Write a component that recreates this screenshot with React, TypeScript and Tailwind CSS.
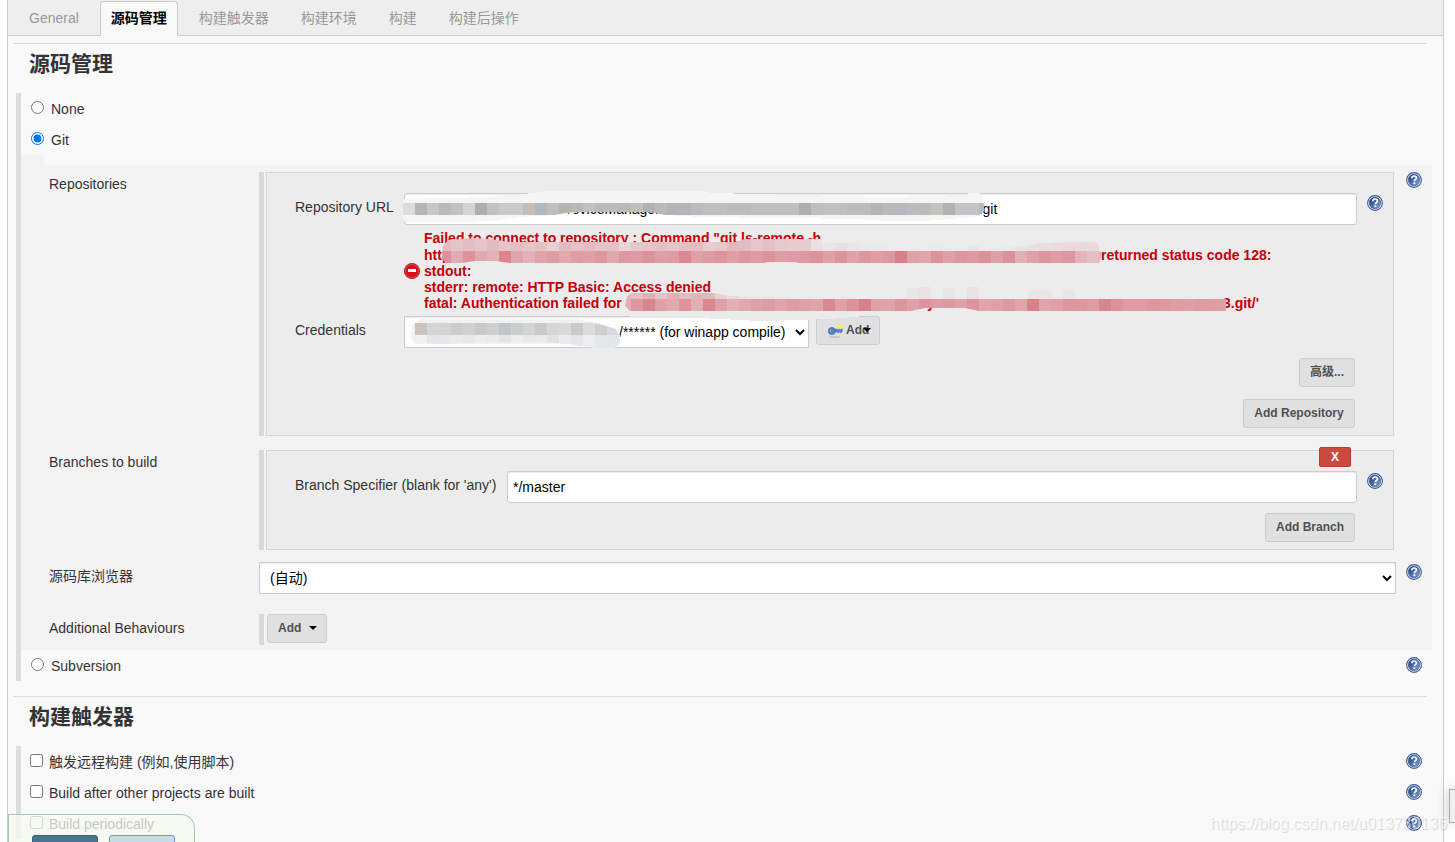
import React, { useState } from 'react';

interface Cell {
  x: number;
  y: number;
  h: number;
  colors: string[];
}

const TABS = ['General', '源码管理', '构建触发器', '构建环境', '构建', '构建后操作'];

const TRIGGERS = ['触发远程构建 (例如,使用脚本)', 'Build after other projects are built', 'Build periodically'];

const URL_CELLS: Cell[] = [
  {
    x: 403,
    y: 203,
    h: 12,
    colors: [
      '#dcdcd9', '#b8b4ae', '#c5c7ca', '#b9bab9', '#c3c2bf', '#d2d4d5', '#aeaeac', '#bfc3c6', '#cacaca', '#cacaca',
      '#c6beb6', '#adb8bf', '#bfbfbd', '#b8b5b1', '#bbb9b6', '#bfc2c1', '#b9bcbd', '#b9bcbd', '#bababa', '#c2beb8',
      '#b0b1b4', '#bcbab6', '#b2b4b6', '#b4b5b6', '#b9bcbd', '#bdc0c2', '#bfc0bd', '#babdbf', '#bbbcbb', '#bfc0bd',
      '#bfc0bd', '#bfbfbf', '#bfbfbf', '#aeaeac', '#c0bdbc', '#bdc1c4', '#bfc0bd', '#babdc0', '#bcbcbc', '#b4b4b3',
      '#b9b9b9', '#b6babe', '#bcbcbd', '#bbbbbb', '#c1c3bd', '#b3b1b2', '#c1c5c8', '#c1c5c8', '#b8babc',
    ],
  },
];

const ERROR_CELLS: Cell[] = [
  {
    x: 439,
    y: 238,
    h: 13,
    colors: [
      '#e3bcc1', '#e5c3c7', '#e2bec2', '#e5c5c8', '#e3babf', '#e5c5c8', '#e3bfc3', '#e5c5c8', '#e4c1c5', '#e7cfd1',
      '#e2b9be', '#e4c3c7', '#e3bdc1', '#e5c5c8', '#e4c1c5', '#e8d3d5', '#e5c7ca', '#e5c5c8', '#e4c0c4', '#e5c3c7',
      '#e4c1c5', '#e4bcc2', '#e8cdd0', '#e7c8cb', '#e3b9bf', '#e3bcc2', '#e5c5c9', '#e4bfc4', '#e6c9cc', '#e7cccf',
      '#e7cccf', '#ebe0e1', '#ebe5e5', '#ebe0e1', '#ebe5e5', '#ebe8e8', '#ebe9e9', '#ebebeb', '#ebebeb', '#ebebeb',
      '#ebebeb', '#ebe9e9', '#ebebeb', '#ebebeb', '#ebe6e6', '#ebebeb', '#ebebeb', '#ebe8e8', '#ebe1e2', '#eadedf',
      '#eadfe0', '#eadcdd', '#e9d9da', '#e9d9da', '#e9dadb', '#e9dadb',
    ],
  },
  {
    x: 439,
    y: 251,
    h: 12,
    colors: [
      '#dc909a', '#e0abb2', '#dc939c', '#e0a8af', '#dfb3b8', '#dc858c', '#dfa5ac', '#e1b2b8', '#dfa3aa', '#de9da6',
      '#e0a8af', '#de9ca4', '#dfa0a7', '#dd979f', '#e0a9b0', '#dd99a1', '#de9ba4', '#dc919b', '#de9ea6', '#de9ba3',
      '#dc8891', '#dfa1a9', '#de99a2', '#dd949d', '#df9fa7', '#dd959f', '#de9ba4', '#dd929c', '#de9ea6', '#df9ba5',
      '#de98a1', '#de929b', '#dfa0a7', '#dd929c', '#e0a2a9', '#dd959e', '#de9ea6', '#de98a1', '#da8088', '#dfa1a9',
      '#e0a5ac', '#dd939c', '#dfa1a9', '#dd969f', '#de9aa3', '#de909b', '#dfa1a9', '#dc929c', '#e1b0b5', '#dfa0a7',
      '#dd949d', '#de9ca4', '#dd97a0', '#e2b5ba', '#e4c0c6', '#e2b0b6',
    ],
  },
  {
    x: 619,
    y: 293,
    h: 6,
    colors: [
      '#e3b6bc', '#e4bdc2', '#e1b1b7', '#e4c4c7', '#e1b1b7', '#e3bcc1', '#e2b4b9', '#e2b9be', '#e7d2d4', '#e9d9da',
      '#ebe1e2', '#ebe5e5', '#ebe1e2', '#ebe5e5', '#ebe8e8',
    ],
  },
  {
    x: 619,
    y: 299,
    h: 12,
    colors: [
      '#e1b0b5', '#dd969f', '#db848b', '#dfa0a7', '#e0a8af', '#dd949d', '#e1b0b5', '#db878e', '#dfa1a9', '#e1b0b5',
      '#e0a9b0', '#dfa1a9', '#de9ba3', '#e0a5ac', '#de9ca4', '#dfa1a9', '#e0a5ac', '#dc8891', '#dfa1a9', '#dd939c',
      '#da8088', '#dfa1a9', '#e0a2a9', '#dd949d', '#dfa1a9', '#dd929c', '#de9ba4', '#de98a1', '#dfa1a9', '#dd929c',
      '#e0a5ac', '#dfa1a9', '#de98a1', '#e0a5ac', '#da8088', '#e0a5ac', '#dfa1a9', '#dd959f', '#dd979f', '#de9ba3',
      '#da858e', '#dd929c', '#de9ba4', '#de9ba4', '#dd969f', '#de989f', '#df9da4', '#df9fa7', '#df9aa2', '#df9da4',
      '#df9fa7',
    ],
  },
];

const CREDENTIAL_CELLS: Cell[] = [
  {
    x: 415,
    y: 323,
    h: 12,
    colors: [
      '#c9c4c0', '#d3d5d6', '#d3d5d5', '#cbcdcd', '#d0d3d2', '#c8c9c8', '#cfcfcf', '#c2c5c8', '#cbcece', '#d2d4d4',
      '#c8cac9', '#d5d6d6', '#d8dada', '#cccac6', '#dddddd', '#cfcfcd', '#d4dadf', '#d8dde1',
    ],
  },
  {
    x: 415,
    y: 335,
    h: 13,
    colors: [
      '#f2f0ef', '#e4e6e7', '#e6e9ea', '#ebebeb', '#e6e9ea', '#eeeeee', '#e8eaeb', '#e4e4e5', '#eceded', '#e6e9ea',
      '#eaebeb', '#e0e1e1', '#e9ebec', '#e4e6e7', '#ebedef', '#e4e7eb', '#e3e7ea', '#e6e9ec',
    ],
  },
];

function Cells({ rows }: { rows: Cell[] }) {
  return (
    <>
      {rows.map((row) =>
        row.colors.map((color, i) => (
          <rect key={`${row.x}-${row.y}-${i}`} x={row.x + i * 12} y={row.y} width="12" height={row.h} fill={color} />
        ))
      )}
    </>
  );
}

// Covers the private parts of the repository form
function Redaction() {
  return (
    <svg
      className="absolute -top-px -left-px pointer-events-none"
      width="1000"
      height="190"
      viewBox="266 172 1000 190"
      shapeRendering="crispEdges"
      aria-hidden="true"
    >
      <defs>
        <clipPath id="url-clip">
          <path d="M403 198H982L984 205V211L979 215H665L655 213L645 212H580L565 213L555 215H403z" />
        </clipPath>
        <clipPath id="error-clip">
          <path d="M443 246L448 240L475 238L490 239L510 242H735L745 239H822V243L880 243L1020 247L1040 243L1085 242H1097L1099 247V251L1102 253L1099 263H799L795 262H768L764 263H510L495 261H475L462 263H446L442 259z" />
          <path d="M627 296L632 293H715L730 296L760 297L800 299H1226V311H979L965 308H925L911 311H630L625 306z" />
        </clipPath>
        <clipPath id="credential-clip">
          <path d="M415 321L440 319H575L602 325L616 329L619 336V345L614 348H597L570 344L540 342H500L440 344L415 342z" />
        </clipPath>
      </defs>
      <path d="M403 199L490 197L533 193L545 191H700L712 193L885 197L930 196L966 195L969 193H980L984 200V211L975 217L925 221H885L860 219L700 217L665 215L655 212H580L557 215L520 217L490 221L460 222H405L403 217z" fill="#f5f5f5" />
      <g clipPath="url(#url-clip)">
        <Cells rows={URL_CELLS} />
      </g>
      <g clipPath="url(#error-clip)">
        <Cells rows={ERROR_CELLS} />
      </g>
      <path d="M919 287h12v12h-12zM967 287h12v12h-12z" fill="#eae1e1" />
      <path d="M907 288h12v11h-12zM943 288h12v11h-12zM1028 290h24v9h-24zM1063 290h12v9h-12z" fill="#ebe6e6" />
      <path d="M628 311H911L883 316H865L830 319L760 321L700 318H631z" fill="#ebebeb" />
      <path d="M412 325L420 319H575L600 323L616 329L620 336V344L614 348H597L565 344H460L415 344L411 338z" fill="#f1f1f1" />
      <g clipPath="url(#credential-clip)">
        <Cells rows={CREDENTIAL_CELLS} />
      </g>
    </svg>
  );
}

function HelpButton({ label }: { label: string }) {
  return (
    <button type="button" aria-label={`Help for ${label}`} className="block size-4 shrink-0">
      <svg viewBox="0 0 16 16" className="size-4">
        <defs>
          <linearGradient id="help-fill" x1="0" y1="0" x2="1" y2="1">
            <stop offset="0.2" stopColor="#274c8c" />
            <stop offset="1" stopColor="#8ba6d3" />
          </linearGradient>
        </defs>
        <circle cx="8" cy="8" r="7.4" fill="#fff" stroke="#3a5a98" strokeWidth="1.1" />
        <circle cx="8" cy="8" r="5.9" fill="url(#help-fill)" stroke="#35558f" strokeWidth="0.5" />
        <path
          d="M5.8 6.2C5.8 4.7 6.8 4 8.1 4c1.4 0 2.3.8 2.3 1.9 0 1.6-2 1.6-2 3.3"
          fill="none"
          stroke="#fff"
          strokeWidth="1.7"
        />
        <path d="M7.4 10.3h1.9v1.8H7.4z" fill="#fff" />
      </svg>
    </button>
  );
}

function ErrorIcon() {
  return (
    <svg viewBox="0 0 16 16" className="size-4 shrink-0" aria-hidden="true">
      <circle cx="8" cy="8" r="7.6" fill="#d3101c" stroke="#a5121b" strokeWidth="0.8" />
      <circle cx="8" cy="8" r="6.6" fill="none" stroke="#e8606a" strokeWidth="0.6" />
      <rect x="4" y="6" width="8" height="3" fill="#fff" />
    </svg>
  );
}

function KeyIcon() {
  return (
    <svg viewBox="0 0 16 16" className="size-4 shrink-0" aria-hidden="true">
      <ellipse cx="8" cy="15" rx="6" ry="0.9" fill="#c6c6c6" />
      <path d="M6 7.2h9.4v2.2h-.8v1.4h-1.8V9.6h-1v1.2h-1.6V9.8H6z" fill="#5b83bf" stroke="#4169a8" strokeWidth="0.4" />
      <circle cx="4.9" cy="9" r="3.6" fill="#5b83c4" stroke="#3d65a5" strokeWidth="0.7" />
      <circle cx="3.6" cy="8.8" r="0.7" fill="#a9c0e2" />
      <circle cx="12.8" cy="4.6" r="2.4" fill="#f6e83a" />
      <circle cx="12.8" cy="4.6" r="1" fill="#fffbb0" />
    </svg>
  );
}

function Caret() {
  return (
    <svg viewBox="0 0 8 4" className="h-1 w-2 shrink-0" aria-hidden="true">
      <path d="M0 0h8L4 4z" fill="#000" />
    </svg>
  );
}

function GreyButton({ children, className = '' }: { children: React.ReactNode; className?: string }) {
  return (
    <button
      type="button"
      className={`flex h-[29px] items-center rounded-[3px] border border-[#ccc] bg-[#e0e0e0] px-2.5 pb-0.5 text-xs font-bold text-[#505050] ${className}`}
    >
      {children}
    </button>
  );
}

function Section({ title, children }: { title: string; children: React.ReactNode }) {
  return (
    <section className="pt-[7px]">
      <hr className="mr-4 ml-[5px] border-[#ddd]" />
      <h2 className="mt-1 ml-[21px] h-[45px] text-[21px] leading-8 font-bold">{title}</h2>
      <div className="mr-[11px] mb-2 ml-2 border-l-[5px] border-[#ddd]">{children}</div>
    </section>
  );
}

function ScmRadio({ name, checked, onChange }: { name: string; checked: boolean; onChange: () => void }) {
  return (
    <div className="flex h-[31px] items-start justify-between pr-2.5 pl-2.5">
      <label className="flex items-start">
        <input type="radio" name="scm" checked={checked} onChange={onChange} className="mt-2 mr-[7px] size-[13px]" />
        <span className="mt-1.5 leading-5">{name}</span>
      </label>
      {name === 'Subversion' && (
        <div className="mt-[7px]">
          <HelpButton label={name} />
        </div>
      )}
    </div>
  );
}

const inputClass =
  'h-8 min-w-0 flex-1 rounded-[3px] border border-[#ccc] bg-white px-[5px] text-black shadow-[inset_0_1px_1px_rgba(0,0,0,0.08)]';

const selectClass = 'h-8 border border-[#ccc] bg-white px-1.5 text-black shadow-[inset_0_1px_1px_rgba(0,0,0,0.08)]';

function GitSettings() {
  const repositoryUrl = ' '.repeat(39) + 'DeviceManager' + ' '.repeat(82) + '.git';

  return (
    <>
      <div className="h-2.5 w-[23px] bg-[#f3f3f3]" />
      <div className="bg-[#f3f3f3] pt-[7px] pb-[5px] pl-7">
        <div className="flex">
          <div className="w-[210px] shrink-0 pt-0.5 leading-5">Repositories</div>
          <div className="mr-3 min-w-0 flex-1 border-l-[5px] border-[#d9d9d9] pl-0.5">
            <div className="relative border border-[#d3d3d3] bg-[#ececec] pt-5 pb-[7px] pl-7">
              <div className="flex">
                <label htmlFor="repo-url" className="w-[109px] shrink-0 pt-1 leading-5">
                  Repository URL
                </label>
                <input id="repo-url" type="text" defaultValue={repositoryUrl} className={inputClass} />
                <div className="mt-0.5 mr-2.5 ml-2.5">
                  <HelpButton label="Repository URL" />
                </div>
              </div>
              <div className="mt-[5px] ml-[109px] flex h-[86px] items-start font-bold text-[#c4000a]">
                <div className="mt-[33px]">
                  <ErrorIcon />
                </div>
                <div className="ml-1 leading-4 whitespace-nowrap">
                  <div className="mb-px">Failed to connect to repository : Command "git ls-remote -h</div>
                  <div className="flex">
                    <span className="w-[677px]">http</span>returned status code 128:
                  </div>
                  <div>stdout:</div>
                  <div>stderr: remote: HTTP Basic: Access denied</div>
                  <div className="flex">
                    <span className="w-[503px]">fatal: Authentication failed for</span>
                    <span className="w-[296px]">y</span>3.git/'
                  </div>
                </div>
              </div>
              <div className="flex">
                <label htmlFor="credentials" className="w-[109px] shrink-0 pt-1 leading-5">
                  Credentials
                </label>
                <select id="credentials" className={`w-[405px] pl-[210px] ${selectClass}`}>
                  <option>/****** (for winapp compile)</option>
                </select>
                <GreyButton className="ml-[7px] w-16">
                  <KeyIcon />
                  <span className="ml-[3px]">Add</span>
                  <span className="-ml-1.5">
                    <Caret />
                  </span>
                </GreyButton>
              </div>
              <div className="mt-2.5 mr-[38px] flex flex-col items-end gap-3">
                <GreyButton>高级...</GreyButton>
                <GreyButton className="w-28 justify-center">Add Repository</GreyButton>
              </div>
              <Redaction />
            </div>
          </div>
          <div className="mr-2.5">
            <HelpButton label="Repositories" />
          </div>
        </div>

        <div className="mt-3.5 flex">
          <div className="w-[210px] shrink-0 pt-0.5 leading-5">Branches to build</div>
          <div className="mr-[38px] min-w-0 flex-1 border-l-[5px] border-[#d9d9d9] pl-0.5">
            <div className="relative border border-[#d3d3d3] bg-[#ececec] pt-5 pb-[7px] pl-7">
              <button
                type="button"
                className="absolute -top-1 right-[42px] h-5 w-8 rounded-xs border border-[#b83c32] bg-[#cb4a3e] text-xs leading-4 font-bold text-white"
              >
                X
              </button>
              <div className="flex">
                <label htmlFor="branch" className="w-[212px] shrink-0 pt-1 leading-5">
                  Branch Specifier (blank for 'any')
                </label>
                <input id="branch" type="text" defaultValue="*/master" className={inputClass} />
                <div className="mt-0.5 mr-2.5 ml-2.5">
                  <HelpButton label="Branch Specifier" />
                </div>
              </div>
              <div className="mt-2.5 mr-[38px] flex justify-end">
                <GreyButton>Add Branch</GreyButton>
              </div>
            </div>
          </div>
        </div>

        <div className="mt-3 flex">
          <label htmlFor="browser" className="w-[210px] shrink-0 pt-1 leading-5">
            源码库浏览器
          </label>
          <select id="browser" className={`min-w-0 flex-1 ${selectClass}`}>
            <option>(自动)</option>
          </select>
          <div className="mt-0.5 mr-2.5 ml-2.5">
            <HelpButton label="源码库浏览器" />
          </div>
        </div>

        <div className="mt-5 flex">
          <div className="w-[210px] shrink-0 pt-1 leading-5">Additional Behaviours</div>
          <div className="h-[31px] border-l-[5px] border-[#d9d9d9] pl-[3px]">
            <GreyButton className="w-[60px] gap-2">
              Add
              <Caret />
            </GreyButton>
          </div>
        </div>
      </div>
    </>
  );
}

export default function App() {
  const [tab, setTab] = useState('源码管理');
  const [scm, setScm] = useState('Git');

  return (
    <div className="relative h-screen overflow-hidden bg-white font-['Liberation_Sans','Noto_Sans_CJK_SC',sans-serif] text-sm text-[#333]">
      <main className="mr-[11px] ml-[7px] min-h-screen border-x border-[#ccc] bg-[#f9f9f9]">
        <nav className="flex h-9 items-end gap-2.5 border-b border-[#ccc] bg-[#eee] pl-2.5">
          {TABS.map((name) => (
            <button
              key={name}
              type="button"
              onClick={() => setTab(name)}
              className={`-mb-px h-[35px] rounded-t-[4px] border px-2.5 pb-0.5 ${
                name === tab
                  ? 'border-[#ccc] border-b-[#f9f9f9] bg-[#f9f9f9] font-bold text-black'
                  : 'border-transparent text-[#999]'
              }`}
            >
              {name}
            </button>
          ))}
        </nav>

        <Section title="源码管理">
          <ScmRadio name="None" checked={scm === 'None'} onChange={() => setScm('None')} />
          <ScmRadio name="Git" checked={scm === 'Git'} onChange={() => setScm('Git')} />
          <GitSettings />
          <ScmRadio name="Subversion" checked={scm === 'Subversion'} onChange={() => setScm('Subversion')} />
        </Section>

        <Section title="构建触发器">
          {TRIGGERS.map((name) => (
            <div key={name} className="flex h-[31px] items-start justify-between pr-2.5 pl-[9px]">
              <label className="flex items-start">
                <input type="checkbox" className="mt-2 mr-1.5 size-[13px]" />
                <span className="mt-1.5 leading-5">{name}</span>
              </label>
              <div className="mt-[7px]">
                <HelpButton label={name} />
              </div>
            </div>
          ))}
        </Section>
      </main>

      <div className="absolute bottom-0 left-2 flex h-7 w-[187px] gap-[11px] overflow-hidden rounded-tr-[14px] border border-b-0 border-[#a3cbb3] bg-[#f5f9f0]/75 pt-5 pl-[23px]">
        <button type="button" aria-label="保存" className="h-[29px] w-[66px] shrink-0 rounded-[3px] border border-[#3a6073] bg-[#4b758b]" />
        <button type="button" aria-label="应用" className="h-[29px] w-[66px] shrink-0 rounded-[3px] border border-[#6f97cf] bg-[#cbd9ec]" />
      </div>

      <div className="absolute right-0 bottom-[19px] h-[34px] w-1.5 border border-r-0 border-[#aaa] bg-[#f0f0f0] shadow-[0_0_12px_rgba(0,0,0,0.3)]" />
      <div className="pointer-events-none absolute right-2 bottom-2 text-base leading-5 text-white/60 [text-shadow:1px_1px_1px_rgba(0,0,0,0.14)]">
        https://blog.csdn.net/u013730136
      </div>
    </div>
  );
}
